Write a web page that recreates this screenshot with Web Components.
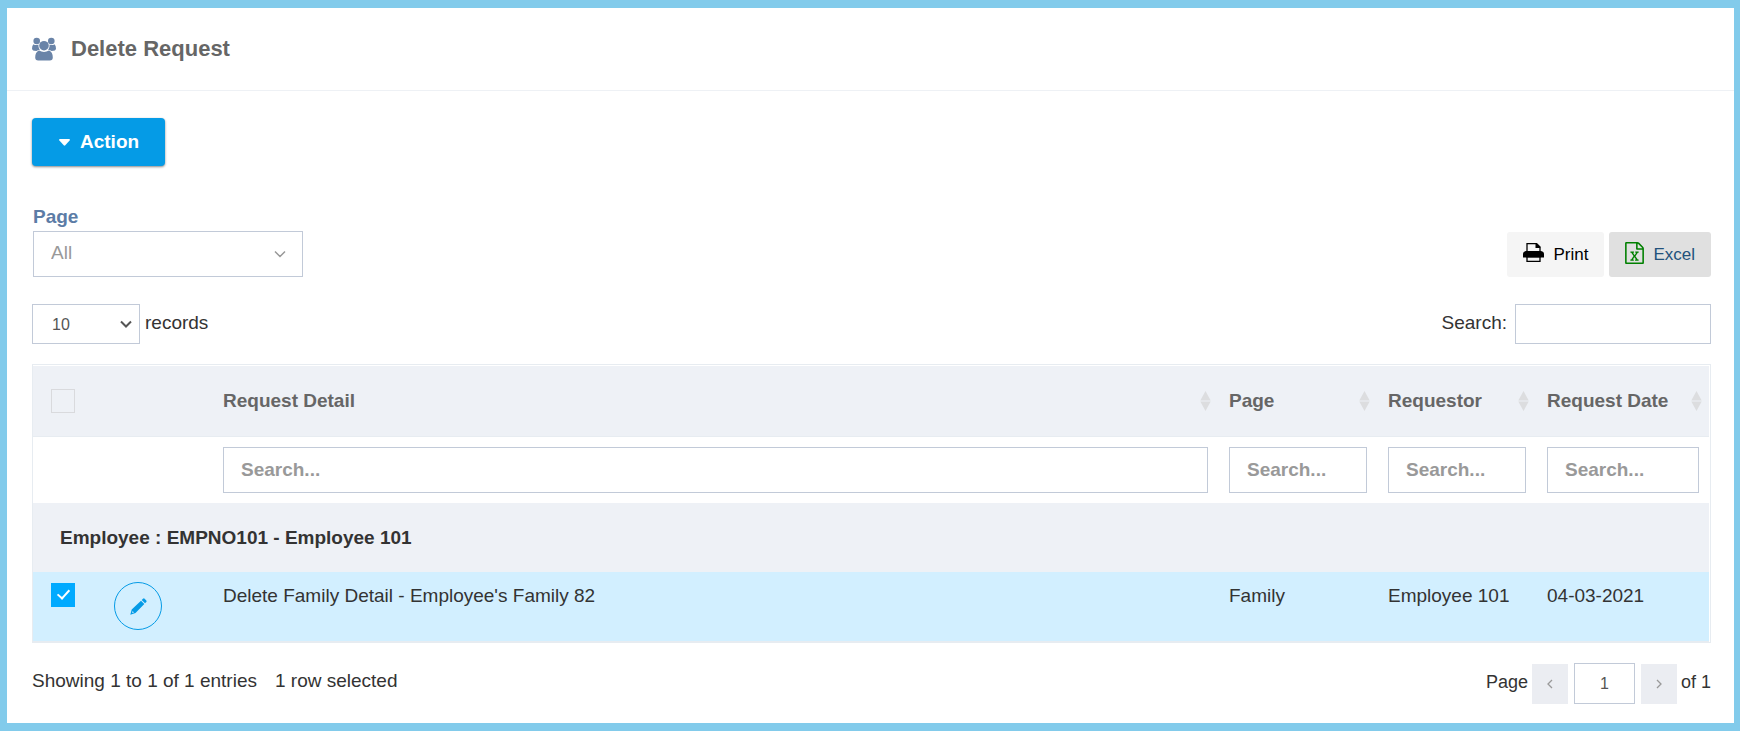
<!DOCTYPE html>
<html lang="en">
<head>
<meta charset="utf-8">
<meta name="viewport" content="width=device-width, initial-scale=1">
<title>Delete Request</title>
<style>
  :root {
    --frame: #82cbeb;
    --accent: #059be6;
    --line: #e7ecf1;
    --field-line: #c2cad8;
    --band: #eef1f6;
    --selected: #d2efff;
    --muted: #999;
    --heading: #666;
  }

  body {
    margin: 0;
    background: var(--frame);
    color: #333;
    font: 19px/24px "Liberation Sans", Arial, sans-serif;
  }
</style>
</head>
<body>
<request-page></request-page>

<script>
const ICONS = {
  users: {
    box: "0 0 24 24",
    body: /* html */`
      <circle cx="4.700" cy="4" r="3.300"/><circle cx="19.300" cy="4" r="3.300"/>
      <path d="M1.500 7.200Q4 8.900 6.400 7.400Q6 10.500 7.800 13Q5.500 13 4.500 14Q0 14 0 11.500Q0 8.500 1.500 7.200z"/>
      <path d="M22.500 7.200Q20 8.900 17.600 7.400Q18 10.500 16.200 13Q18.500 13 19.500 14Q24 14 24 11.500Q24 8.500 22.500 7.200z"/>
      <circle cx="12" cy="8.700" r="4.800"/>
      <path d="M7 13.500Q12 16.300 17 13.500Q20.800 15 20.800 20.500Q20.800 23.500 17.800 23.500H6.200Q3.200 23.500 3.200 20.500Q3.200 15 7 13.500z"/>`
  },
  caret: {
    box: "0 0 11 7",
    body: `<path d="M1 0H10Q11.500 .3 10.600 1.500L6.300 6.300Q5.500 7 4.700 6.300L.4 1.500Q-.5 .3 1 0z"/>`
  },
  print: {
    box: "0 0 21 19",
    body: /* html */`
      <path d="M4 10V.6H13.500L17 4.100V10" fill="none" stroke="currentColor" stroke-width="1.300"/>
      <path d="M12.500 .5H14L17.200 3.800V5H12.500z"/>
      <path d="M3 8H18Q21 8.500 21 11V14.600H0V11Q0 8.500 3 8z"/>
      <path d="M4.700 8V3H16.300V8z" fill="none"/>
      <path d="M4 13.500H17V18.300H4z" fill="#f5f5f5" stroke="currentColor" stroke-width="1.300"/>
      <path d="M3.500 12.500H17.500V14.600H3.500z"/>`
  },
  excel: {
    box: "0 0 1536 1792",
    body: `<path d="M1468 380q28 28 48 76t20 88v1152q0 40-28 68t-68 28h-1344q-40 0-68-28t-28-68v-1600q0-40 28-68t68-28h896q40 0 88 20t76 48zM1024 136v376h376q-10-29-22-41l-313-313q-12-12-41-22zM1408 1664v-1024h-416q-40 0-68-28t-28-68v-416h-768v1536h1280zM429 1430v106h281v-106h-75l103-161q5-7 10-16.500t7.500-13.500 3.500-4h2q1 4 5 10 2 4 4.500 7.500t6 8 6.500 8.500l107 161h-76v106h291v-106h-68l-192-273 195-282h67v-107h-279v107h74l-103 159q-4 7-10 16.500t-9 13.500l-2 3h-2q-1-4-5-10-6-11-17-23l-106-159h76v-107h-290v107h68l189 272-194 283h-68z"/>`
  },
  pencil: {
    box: "0 0 17 17",
    body: /* html */`
      <path d="M11.700 2L13 .7Q13.800 0 14.600 .7L16.300 2.400Q17 3.200 16.300 4L15 5.300z"/>
      <path fill-rule="evenodd" d="M11 2.700L14.300 6L5.500 15.100L.3 16.700L1.700 11.500zM2.600 13.100L2.100 14.900L4 14.500z"/>`
  },
  down: {
    box: "0 0 12 8",
    body: `<path d="M1 1.500L6 6.500L11 1.500" fill="none" stroke="currentColor" stroke-width="var(--stroke, 2)"/>`
  },
  left: {
    box: "0 0 6 10",
    body: `<path d="M5 1L1 5L5 9" fill="none" stroke="currentColor" stroke-width="1.300"/>`
  },
  right: {
    box: "0 0 6 10",
    body: `<path d="M1 1L5 5L1 9" fill="none" stroke="currentColor" stroke-width="1.300"/>`
  },
  sort: {
    box: "0 0 11 20",
    body: `<path d="M5.500 0L10.700 9.500H.3zM.3 10.500H10.700L5.500 20z"/>`
  }
};

class UiIcon extends HTMLElement {
  constructor() {
    super();
    this.attachShadow({ mode: "open" });
  }

  // width and height come from the attributes, in pixels
  connectedCallback() {
    const icon = ICONS[this.getAttribute("name")];
    this.shadowRoot.innerHTML = /* html */`
      <style>
        :host { display: inline-flex; flex: none; }
        svg { display: block; fill: currentColor; }
      </style>
      <svg viewBox="${icon.box}" width="${this.getAttribute("w")}" height="${this.getAttribute("h")}" aria-hidden="true">${icon.body}</svg>
    `;
  }
}

class PagePortlet extends HTMLElement {
  constructor() {
    super();
    this.attachShadow({ mode: "open" });
  }

  static get styles() {
    return /* css */`
      :host {
        display: block;
        box-sizing: border-box;
        min-height: 100vh;
        padding: 8px 6px 8px 7px;
      }

      section {
        box-sizing: border-box;
        min-height: calc(100vh - 16px);
        background: white;
      }

      header {
        display: flex;
        align-items: center;
        gap: 15px;
        height: 82px;
        padding-inline: 25px;
        border-bottom: 1px solid #eef1f5;
        color: #6a84a8;
      }

      h1 {
        margin: 0;
        color: var(--heading);
        font-size: 22px;
        font-weight: 600;
      }

      .content {
        padding: 27px 23px 19px 25px;
      }
    `;
  }

  connectedCallback() {
    this.shadowRoot.innerHTML = /* html */`
      <style>${PagePortlet.styles}</style>
      <section>
        <header>
          <ui-icon name="users" w="24" h="24"></ui-icon>
          <h1>${this.getAttribute("heading")}</h1>
        </header>
        <div class="content"><slot></slot></div>
      </section>
    `;
  }
}

class ActionButton extends HTMLElement {
  constructor() {
    super();
    this.attachShadow({ mode: "open" });
  }

  static get styles() {
    return /* css */`
      :host { display: inline-flex; }

      button {
        display: flex;
        align-items: center;
        gap: 10px;
        height: 48px;
        padding: 0 26px 0 27px;
        border: 0;
        border-radius: 4px;
        background: var(--accent);
        box-shadow: 0 1px 3px rgb(0 0 0 / 20%), 0 1px 2px rgb(0 0 0 / 30%);
        color: white;
        font: bold 19px/24px "Liberation Sans", Arial, sans-serif;
      }
    `;
  }

  connectedCallback() {
    this.shadowRoot.innerHTML = /* html */`
      <style>${ActionButton.styles}</style>
      <button type="button" aria-haspopup="true">
        <ui-icon name="caret" w="11" h="7"></ui-icon><slot></slot>
      </button>
    `;
  }
}

class ToolButton extends HTMLElement {
  constructor() {
    super();
    this.attachShadow({ mode: "open" });
  }

  static get styles() {
    return /* css */`
      :host { display: inline-flex; }

      button {
        display: flex;
        align-items: center;
        gap: 9px;
        height: 45px;
        padding: 0 16px;
        border: 0;
        border-radius: 3px;
        background: #f5f5f5;
        color: black;
        font: 17px/20px "Liberation Sans", Arial, sans-serif;
      }

      ui-icon { margin-bottom: 4px; }

      :host([kind="excel"]) button {
        background: #e0e0e0;
        color: #23527c;
      }

      :host([kind="excel"]) ui-icon { color: #008000; }
    `;
  }

  connectedCallback() {
    const kind = this.getAttribute("kind");
    const size = kind === "excel" ? `w="19" h="22"` : `w="21" h="19"`;
    this.shadowRoot.innerHTML = /* html */`
      <style>${ToolButton.styles}</style>
      <button type="button"><ui-icon name="${kind}" ${size}></ui-icon><slot></slot></button>
    `;
  }
}

class PageFilter extends HTMLElement {
  constructor() {
    super();
    this.attachShadow({ mode: "open" });
  }

  static get styles() {
    return /* css */`
      :host {
        display: block;
        width: 270px;
        margin-left: 1px;
      }

      label {
        display: block;
        color: #5c7ca6;
        font-weight: bold;
      }

      .box {
        display: grid;
        align-items: center;
        margin-top: 2px;
        color: var(--muted);
        --stroke: 1.5;
      }

      select, ui-icon { grid-area: 1 / 1; }

      select {
        appearance: none;
        width: 100%;
        height: 46px;
        padding: 0 40px 2px 17px;
        border: 1px solid var(--field-line);
        border-radius: 0;
        background: white;
        color: inherit;
        font: inherit;
      }

      ui-icon {
        justify-self: end;
        margin-right: 17px;
        pointer-events: none;
      }
    `;
  }

  connectedCallback() {
    this.shadowRoot.innerHTML = /* html */`
      <style>${PageFilter.styles}</style>
      <label for="page">Page</label>
      <div class="box">
        <select id="page"><option>All</option></select>
        <ui-icon name="down" w="12" h="8"></ui-icon>
      </div>
    `;
  }
}

class RecordsLength extends HTMLElement {
  constructor() {
    super();
    this.attachShadow({ mode: "open" });
  }

  static get styles() {
    return /* css */`
      :host {
        display: flex;
        gap: 5px;
      }

      .box {
        display: grid;
        align-items: center;
        width: 108px;
        color: #555;
        --stroke: 2;
      }

      select, ui-icon { grid-area: 1 / 1; }

      select {
        appearance: none;
        height: 40px;
        padding: 2px 30px 0 19px;
        border: 1px solid var(--field-line);
        border-radius: 0;
        background: white;
        color: inherit;
        font: 16px/20px "Liberation Sans", Arial, sans-serif;
      }

      ui-icon {
        justify-self: end;
        margin-right: 8px;
        pointer-events: none;
      }

      label { padding-top: 7px; }
    `;
  }

  connectedCallback() {
    this.shadowRoot.innerHTML = /* html */`
      <style>${RecordsLength.styles}</style>
      <div class="box">
        <select id="length"><option>10</option></select>
        <ui-icon name="down" w="12" h="8"></ui-icon>
      </div>
      <label for="length">records</label>
    `;
  }
}

class TableSearch extends HTMLElement {
  constructor() {
    super();
    this.attachShadow({ mode: "open" });
  }

  static get styles() {
    return /* css */`
      :host {
        display: flex;
        gap: 8px;
      }

      label { padding-top: 7px; }

      input {
        box-sizing: border-box;
        width: 196px;
        height: 40px;
        padding: 0 12px;
        border: 1px solid var(--field-line);
        font: inherit;
      }
    `;
  }

  connectedCallback() {
    this.shadowRoot.innerHTML = /* html */`
      <style>${TableSearch.styles}</style>
      <label for="search">Search:</label>
      <input id="search" type="text">
    `;
  }
}

const COLUMNS = ["Request Detail", "Page", "Requestor", "Request Date"];

const GROUPS = [{
  title: "Employee : EMPNO101 - Employee 101",
  rows: [["Delete Family Detail - Employee's Family 82", "Family", "Employee 101", "04-03-2021"]]
}];

class RequestTable extends HTMLElement {
  constructor() {
    super();
    this.attachShadow({ mode: "open" });
  }

  static get styles() {
    return /* css */`
      :host {
        display: block;
        padding: 1px 1px 0 0;
        border: 1px solid var(--line);
      }

      table {
        width: 100%;
        border-collapse: separate;
        border-spacing: 0;
        table-layout: fixed;
      }

      .check { width: 71px; }
      .edit { width: 109px; }
      .narrow { width: 159px; }
      .date { width: 172px; }

      th, td {
        box-sizing: border-box;
        padding: 10px 11px 10px 10px;
        text-align: left;
        vertical-align: top;
      }

      th:last-child, td:last-child { padding-right: 10px; }

      .titles th {
        height: 71px;
        border-bottom: 1px solid var(--line);
        background: var(--band);
        color: var(--heading);
        vertical-align: middle;
      }

      .title {
        display: flex;
        align-items: center;
        justify-content: space-between;
        margin-right: -3px;
      }

      .title ui-icon { color: #dcdddf; }

      .filters td { height: 66px; }

      .filters input {
        display: block;
        box-sizing: border-box;
        width: 100%;
        height: 46px;
        padding: 0 17px;
        border: 1px solid var(--field-line);
        color: #555;
        font: bold 19px/24px "Liberation Sans", Arial, sans-serif;
      }

      .filters input::placeholder {
        color: var(--muted);
        opacity: 1;
      }

      .group th {
        height: 69px;
        padding-left: 27px;
        background: var(--band);
        vertical-align: middle;
      }

      .selected td {
        height: 70px;
        border-bottom: 1px solid var(--line);
        background: var(--selected);
      }

      .selected .text { padding-top: 12px; }

      td.check, th.check { padding-left: 18px; }
      td.check { padding-top: 11px; }

      input[type="checkbox"] {
        appearance: none;
        display: grid;
        place-items: center;
        box-sizing: border-box;
        width: 24px;
        height: 24px;
        margin: 0;
        border: 1px solid #d9dadd;
      }

      input[type="checkbox"]:checked {
        border-color: #0af;
        background: #0af;
      }

      input[type="checkbox"]:checked::after {
        content: "";
        width: 5px;
        height: 10px;
        margin-bottom: 4px;
        border: solid white;
        border-width: 0 2px 2px 0;
        rotate: 42deg;
      }

      button {
        display: flex;
        align-items: center;
        justify-content: center;
        width: 48px;
        height: 48px;
        padding: 0;
        border: 1px solid var(--accent);
        border-radius: 50%;
        background: none;
        color: var(--accent);
      }
    `;
  }

  connectedCallback() {
    this.shadowRoot.innerHTML = this.render();
  }

  renderRow(cells) {
    return /* html */`
      <tr class="selected">
        <td class="check"><input type="checkbox" aria-label="Select row" checked></td>
        <td><button type="button" aria-label="Edit"><ui-icon name="pencil" w="17" h="17"></ui-icon></button></td>
        ${cells.map(text => `<td class="text">${text}</td>`).join("")}
      </tr>
    `;
  }

  render() {
    return /* html */`
      <style>${RequestTable.styles}</style>
      <table>
        <colgroup>
          <col class="check"><col class="edit"><col>
          <col class="narrow"><col class="narrow"><col class="date">
        </colgroup>
        <thead>
          <tr class="titles">
            <th class="check"><input type="checkbox" aria-label="Select all"></th>
            <th></th>
            ${COLUMNS.map(text => `<th><div class="title">${text}<ui-icon name="sort" w="11" h="20"></ui-icon></div></th>`).join("")}
          </tr>
          <tr class="filters">
            <td></td>
            <td></td>
            ${COLUMNS.map(text => `<td><input type="text" placeholder="Search..." aria-label="${text}"></td>`).join("")}
          </tr>
        </thead>
        <tbody>
          ${GROUPS.map(group => `
            <tr class="group"><th colspan="6">${group.title}</th></tr>
            ${group.rows.map(row => this.renderRow(row)).join("")}
          `).join("")}
        </tbody>
      </table>
    `;
  }
}

class TablePager extends HTMLElement {
  constructor() {
    super();
    this.attachShadow({ mode: "open" });
  }

  static get styles() {
    return /* css */`
      :host {
        display: flex;
        align-items: flex-end;
        font-size: 18px;
      }

      label, span { padding-bottom: 10px; }

      button {
        display: flex;
        align-items: center;
        justify-content: center;
        width: 36px;
        height: 40px;
        padding: 0;
        border: 0;
        background: #ebedf2;
        color: var(--muted);
      }

      input {
        box-sizing: border-box;
        width: 61px;
        height: 41px;
        margin-inline: 6px;
        padding: 0;
        border: 1px solid var(--field-line);
        color: #555;
        font: 16px/20px "Liberation Sans", Arial, sans-serif;
        text-align: center;
      }

      label { margin-right: 4px; }
      span { margin-left: 4px; }
    `;
  }

  connectedCallback() {
    this.shadowRoot.innerHTML = /* html */`
      <style>${TablePager.styles}</style>
      <label for="number">Page</label>
      <button type="button" aria-label="Previous"><ui-icon name="left" w="6" h="10"></ui-icon></button>
      <input id="number" type="text" value="1">
      <button type="button" aria-label="Next"><ui-icon name="right" w="6" h="10"></ui-icon></button>
      <span>of 1</span>
    `;
  }
}

class RequestPage extends HTMLElement {
  constructor() {
    super();
    this.attachShadow({ mode: "open" });
  }

  static get styles() {
    return /* css */`
      :host { display: block; }

      .bar {
        display: flex;
        justify-content: space-between;
      }

      .filters {
        align-items: flex-end;
        margin-top: 39px;
      }

      .tools {
        display: flex;
        gap: 5px;
      }

      .controls { margin: 27px 0 20px; }

      .footer { margin-top: 20px; }

      .info {
        display: flex;
        gap: 18px;
        padding-top: 6px;
      }
    `;
  }

  connectedCallback() {
    this.shadowRoot.innerHTML = /* html */`
      <style>${RequestPage.styles}</style>
      <page-portlet heading="Delete Request">
        <action-button>Action</action-button>
        <div class="bar filters">
          <page-filter></page-filter>
          <div class="tools">
            <tool-button kind="print">Print</tool-button>
            <tool-button kind="excel">Excel</tool-button>
          </div>
        </div>
        <div class="bar controls">
          <records-length></records-length>
          <table-search></table-search>
        </div>
        <request-table></request-table>
        <div class="bar footer">
          <div class="info"><span>Showing 1 to 1 of 1 entries</span><span>1 row selected</span></div>
          <table-pager></table-pager>
        </div>
      </page-portlet>
    `;
  }
}

customElements.define("ui-icon", UiIcon);
customElements.define("page-portlet", PagePortlet);
customElements.define("action-button", ActionButton);
customElements.define("tool-button", ToolButton);
customElements.define("page-filter", PageFilter);
customElements.define("records-length", RecordsLength);
customElements.define("table-search", TableSearch);
customElements.define("request-table", RequestTable);
customElements.define("table-pager", TablePager);
customElements.define("request-page", RequestPage);
</script>
</body>
</html>
